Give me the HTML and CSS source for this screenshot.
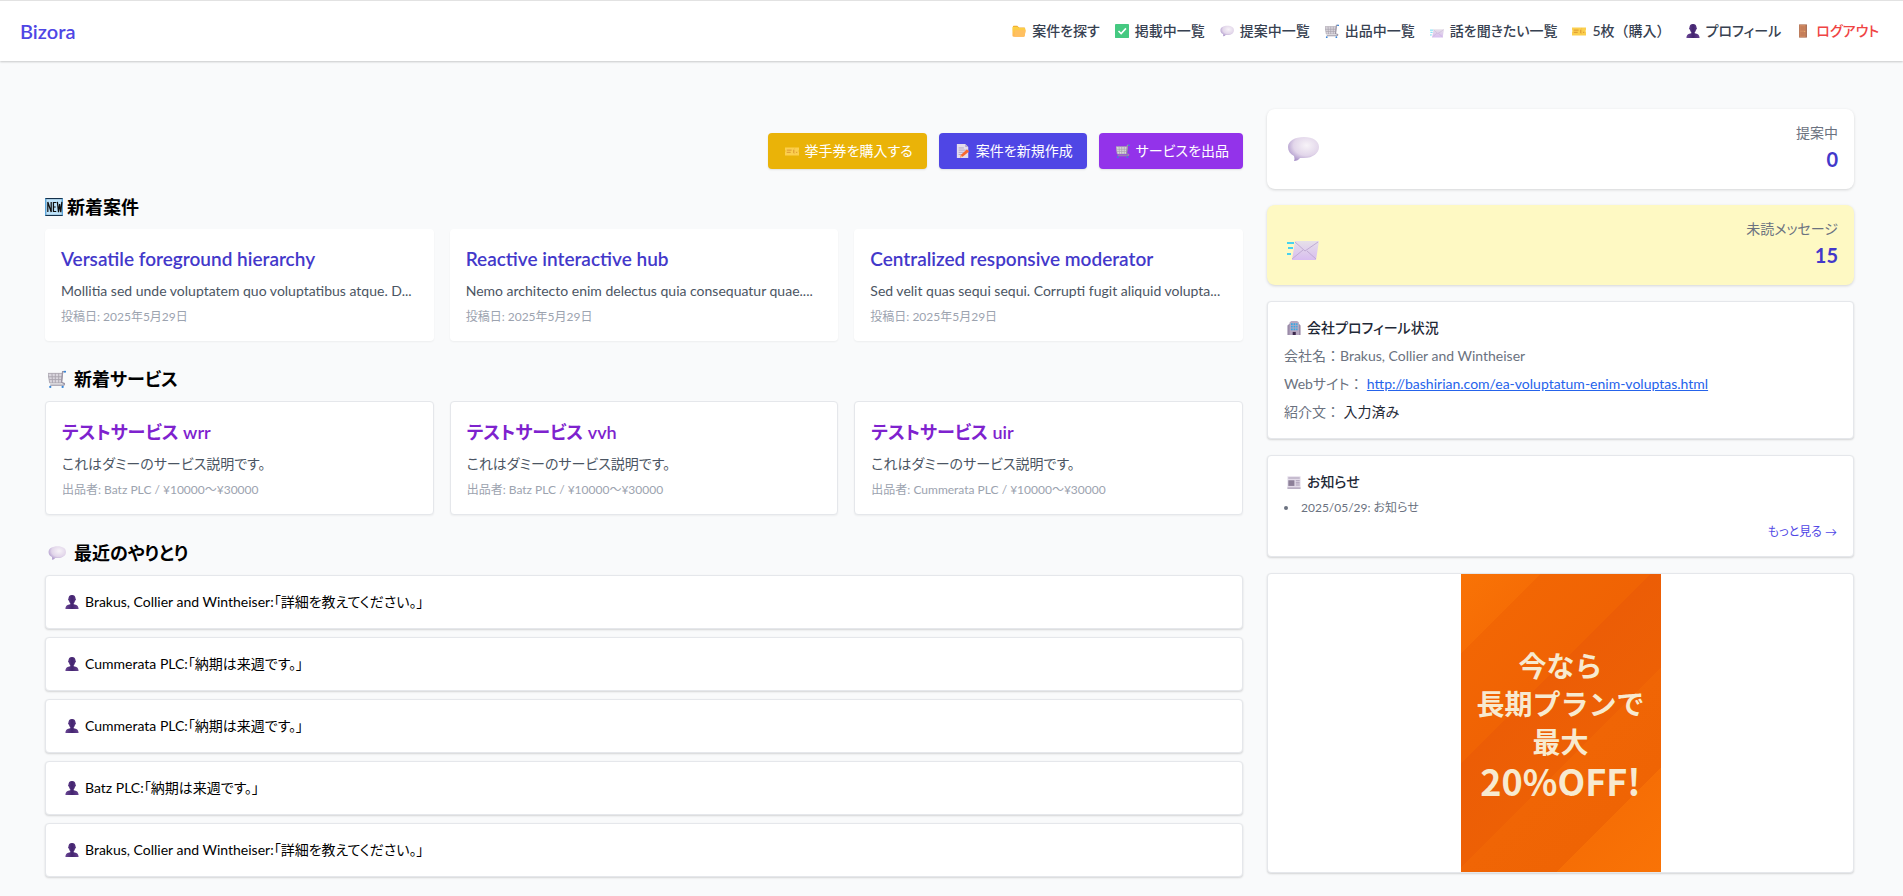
FILE: index.html
```
<!DOCTYPE html>
<html lang="ja">
<head>
    <meta charset="UTF-8">
    <meta name="viewport" content="width=device-width, initial-scale=1.0">
    <title>Bizora</title>
    <link rel="stylesheet" href="styles.css">
</head>
<body>
    <!-- Icon set -->
    <svg class="icon-set" aria-hidden="true">
        <defs>
            <linearGradient id="gFolder" x1="0" y1="0" x2="0" y2="1">
                <stop offset="0" stop-color="#fcd53f"/><stop offset="1" stop-color="#ffb35a"/>
            </linearGradient>
            <radialGradient id="gBubble" cx=".6" cy=".35" r=".7">
                <stop offset="0" stop-color="#f7f3f8"/><stop offset=".6" stop-color="#e2d6ea"/><stop offset="1" stop-color="#a993c9"/>
            </radialGradient>
            <linearGradient id="gMail" x1="0" y1="0" x2="0" y2="1">
                <stop offset="0" stop-color="#e6e0e8"/><stop offset="1" stop-color="#d8bdf0"/>
            </linearGradient>
            <linearGradient id="gUser" x1="0" y1="0" x2="1" y2="0">
                <stop offset="0" stop-color="#6b4796"/><stop offset=".5" stop-color="#43246f"/><stop offset="1" stop-color="#65418f"/>
            </linearGradient>
        </defs>
        <symbol id="folder" viewBox="0 0 32 32">
            <path fill="#f0a52c" d="M2 6q0-2 2-2h8l4 4h12q2 0 2 2v5H2z"/>
            <path fill="url(#gFolder)" d="M1 8q0-2 2-2h9l4 3h12q2 0 2 2l1 3-2 13q0 2-3 2H4q-3 0-3-3z"/>
            <path fill="#ffc061" d="M7 14h23q2 0 1 2l-2 11q0 2-3 2H4q2 0 2-3z"/>
        </symbol>
        <symbol id="check" viewBox="0 0 32 32">
            <rect x="0" y="0" width="32" height="32" rx="2" fill="#45c981"/>
            <path d="M8 16l6 6L25 10" fill="none" stroke="#fff" stroke-width="3.5"/>
        </symbol>
        <symbol id="bubble" viewBox="0 0 32 32">
            <path fill="url(#gBubble)" d="M17 4c9 0 15 4 15 10s-6 11-15 11q-2 0-4 0-2 3-6 3 1-2 0-5C3 21 1 18 1 14 1 8 8 4 17 4z"/>
        </symbol>
        <symbol id="cart" viewBox="0 0 32 32">
            <path fill="#dad6de" d="M0 6h26l-2 17H3z"/>
            <path d="M0 6h26l-2 17H3zM1 12h24M2 17h22M7 6l1 17M13 6v17M19 6v17" fill="none" stroke="#a9a4ae" stroke-width="1.6"/>
            <path d="M30 3h-4l-2 19 5 2q1 3-3 3H4" fill="none" stroke="#9b95a5" stroke-width="2.4"/>
            <path d="M28 3h4" stroke="#3a86d8" stroke-width="3"/>
            <circle cx="4" cy="30" r="2" fill="#3a86d8"/><circle cx="26" cy="30" r="2" fill="#3a86d8"/>
        </symbol>
        <symbol id="mail" viewBox="0 0 32 32">
            <path fill="url(#gMail)" d="M8 12h24l-3 19H5z"/>
            <path d="M8 13l10 9L31 13M5 30l11-9M29 30l-9-8" fill="none" stroke="#c0abd3" stroke-width="1"/>
            <path d="M0 14h7M1 19h5M0 25h4" stroke="#47d2f0" stroke-width="1.8"/>
        </symbol>
        <symbol id="ticket" viewBox="0 0 32 32">
            <path fill="#fbcf4e" d="M0 8h32v5q-2 3 0 6v7H0v-7q2-3 0-6z"/>
            <path d="M4 14h11M4 19h9M20 13v8M25 19h3" stroke="#d78f2e" stroke-width="2"/>
            <path d="M22 9v15" stroke="#e9a93a" stroke-width="1" stroke-dasharray="2 2"/>
        </symbol>
        <symbol id="user" viewBox="0 0 32 32">
            <path fill="url(#gUser)" d="M16 0c6 0 8 4 8 8 2 1 1 4-1 5-1 4-2 5-3 6v2c6 1 11 3 11 11H1c0-8 5-10 11-11v-2c-1-1-2-2-3-6-2-1-3-4-1-5 0-4 2-8 8-8z"/>
        </symbol>
        <symbol id="door" viewBox="0 0 32 32">
            <rect x="7" y="1" width="18" height="30" fill="#a5694f"/>
            <rect x="8" y="2" width="14" height="28" fill="#d08a62"/>
            <path d="M10 5h10v10H10zM10 18h10v10H10z" fill="#c57e59"/>
            <circle cx="20" cy="17" r="1.2" fill="#f5c06a"/>
        </symbol>
        <symbol id="memo" viewBox="0 0 32 32">
            <path fill="#e4dcec" d="M2 0h19l7 7v25H2z"/>
            <path fill="#b9a8cc" d="M21 0l7 7h-7z"/>
            <path d="M6 9h12M6 14h16M6 19h12M6 24h8" stroke="#a99bbb" stroke-width="1.8"/>
            <path fill="#f8682f" d="M25 12l5 5-15 12-6 2 2-6z"/>
            <path fill="#fbb38a" d="M11 25l4 4-6 2z"/>
        </symbol>
        <symbol id="new" viewBox="0 0 32 32">
            <rect x="1" y="1" width="30" height="30" fill="#bfe4fb" stroke="#14304a" stroke-width="2"/>
            <path d="M1 31V1M31 1v30" stroke="#5aa5dc" stroke-width="2"/>
            <path d="M5 25V7l6 18V7M20 8h-5v16h5M15 16h4M22 7l2 18 2-14 2 14 2-18" fill="none" stroke="#111" stroke-width="2.2"/>
        </symbol>
        <symbol id="building" viewBox="0 0 32 32">
            <path fill="#9a8ba8" d="M1 10l6-5v27H1zM26 5l5 5v22h-5z"/>
            <path fill="#b7a9c2" d="M6 3l4-3h13l4 3v29H6z"/>
            <path fill="#35a8e4" d="M9 5h4v4H9zM15 5h4v4h-4zM21 5h3v4h-3zM9 11h4v4H9zM15 11h4v4h-4zM21 11h3v4h-3zM9 17h4v4H9zM15 17h4v4h-4zM21 17h3v4h-3z"/>
            <path fill="#3c2a4d" d="M13 25h7v7h-7z"/>
        </symbol>
        <symbol id="news" viewBox="0 0 32 32">
            <path fill="#e3dbe9" d="M1 3h30v28H1z"/>
            <path d="M3 7h26M20 13h9M20 18h9M20 23h9M1 30h30" stroke="#a99db5" stroke-width="2.4"/>
            <path fill="#8d8099" d="M3 12h14v13H3z"/>
        </symbol>
    </svg>

    <header class="navbar">
        <a href="#" class="logo">Bizora</a>
        <nav class="nav-links">
            <a href="#"><svg class="icon"><use href="#folder"/></svg>案件を探す</a>
            <a href="#"><svg class="icon"><use href="#check"/></svg>掲載中一覧</a>
            <a href="#"><svg class="icon"><use href="#bubble"/></svg>提案中一覧</a>
            <a href="#"><svg class="icon"><use href="#cart"/></svg>出品中一覧</a>
            <a href="#"><svg class="icon"><use href="#mail"/></svg>話を聞きたい一覧</a>
            <a href="#"><svg class="icon"><use href="#ticket"/></svg>5枚<span class="full-width">（購入）</span></a>
            <a href="#"><svg class="icon"><use href="#user"/></svg>プロフィール</a>
            <button type="button" class="logout"><svg class="icon"><use href="#door"/></svg>ログアウト</button>
        </nav>
    </header>

    <div class="container">
        <main class="main-column">
            <div class="actions">
                <button type="button" class="btn btn-yellow"><svg class="icon"><use href="#ticket"/></svg>挙手券を購入する</button>
                <button type="button" class="btn btn-indigo"><svg class="icon"><use href="#memo"/></svg>案件を新規作成</button>
                <button type="button" class="btn btn-purple"><svg class="icon"><use href="#cart"/></svg>サービスを出品</button>
            </div>

            <!-- New projects -->
            <section>
                <h2><svg class="icon icon-new"><use href="#new"/></svg>新着案件</h2>
                <div class="cards">
                    <article class="card">
                        <h3>Versatile foreground hierarchy</h3>
                        <p class="desc">Mollitia sed unde voluptatem quo voluptatibus atque. D...</p>
                        <p class="meta">投稿日: 2025年5月29日</p>
                    </article>
                    <article class="card">
                        <h3>Reactive interactive hub</h3>
                        <p class="desc">Nemo architecto enim delectus quia consequatur quae....</p>
                        <p class="meta">投稿日: 2025年5月29日</p>
                    </article>
                    <article class="card">
                        <h3>Centralized responsive moderator</h3>
                        <p class="desc">Sed velit quas sequi sequi. Corrupti fugit aliquid volupta...</p>
                        <p class="meta">投稿日: 2025年5月29日</p>
                    </article>
                </div>
            </section>

            <!-- New services -->
            <section>
                <h2><svg class="icon"><use href="#cart"/></svg>新着サービス</h2>
                <div class="cards">
                    <article class="card card-service">
                        <h3>テストサービス wrr</h3>
                        <p class="desc">これはダミーのサービス説明です。</p>
                        <p class="meta">出品者: Batz PLC / ¥10000〜¥30000</p>
                    </article>
                    <article class="card card-service">
                        <h3>テストサービス vvh</h3>
                        <p class="desc">これはダミーのサービス説明です。</p>
                        <p class="meta">出品者: Batz PLC / ¥10000〜¥30000</p>
                    </article>
                    <article class="card card-service">
                        <h3>テストサービス uir</h3>
                        <p class="desc">これはダミーのサービス説明です。</p>
                        <p class="meta">出品者: Cummerata PLC / ¥10000〜¥30000</p>
                    </article>
                </div>
            </section>

            <!-- Recent messages -->
            <section>
                <h2><svg class="icon"><use href="#bubble"/></svg>最近のやりとり</h2>
                <ul class="messages">
                    <li><svg class="icon"><use href="#user"/></svg>Brakus, Collier and Wintheiser:「詳細を教えてください。」</li>
                    <li><svg class="icon"><use href="#user"/></svg>Cummerata PLC:「納期は来週です。」</li>
                    <li><svg class="icon"><use href="#user"/></svg>Cummerata PLC:「納期は来週です。」</li>
                    <li><svg class="icon"><use href="#user"/></svg>Batz PLC:「納期は来週です。」</li>
                    <li><svg class="icon"><use href="#user"/></svg>Brakus, Collier and Wintheiser:「詳細を教えてください。」</li>
                </ul>
            </section>
        </main>

        <aside class="side-column">
            <div class="stat">
                <svg class="stat-icon"><use href="#bubble"/></svg>
                <div class="stat-text">
                    <p>提案中</p>
                    <strong>0</strong>
                </div>
            </div>
            <div class="stat stat-unread">
                <svg class="stat-icon"><use href="#mail"/></svg>
                <div class="stat-text">
                    <p>未読メッセージ</p>
                    <strong>15</strong>
                </div>
            </div>

            <section class="panel">
                <h4><svg class="icon"><use href="#building"/></svg>会社プロフィール状況</h4>
                <p class="full-width">会社名：Brakus, Collier and Wintheiser</p>
                <p>Webサイト<span class="full-width">：</span> <a href="#">http://bashirian.com/ea-voluptatum-enim-voluptas.html</a></p>
                <p>紹介文<span class="full-width">：</span> <span class="done">入力済み</span></p>
            </section>

            <section class="panel">
                <h4><svg class="icon"><use href="#news"/></svg>お知らせ</h4>
                <ul class="news">
                    <li>2025/05/29: お知らせ</li>
                </ul>
                <a href="#" class="more">もっと見る →</a>
            </section>

            <div class="ad">
                <div class="ad-banner">
                    <p>今なら</p>
                    <p>長期プランで</p>
                    <p>最大</p>
                    <p class="ad-off">20%OFF!</p>
                </div>
            </div>
        </aside>
    </div>
</body>
</html>
```
FILE: styles.css
```
* {
    box-sizing: border-box;
}
body {
    font-family: Lato, "Noto Sans CJK JP", sans-serif;
    font-size: 14px;
    line-height: 20px;
    font-feature-settings: "palt";
    background: #f9fafb;
    color: #000;
    margin: 0;
}
h2, h3, h4, p, ul {
    margin: 0;
    padding: 0;
}
button {
    font: inherit;
    font-feature-settings: inherit;
    border: none;
    cursor: pointer;
}
.full-width {
    font-feature-settings: normal;
}
.icon-set {
    display: block;
    width: 0;
    height: 0;
}
.icon {
    flex: none;
    width: 14px;
    height: 14px;
    margin: 0 6px 0 3px;
}

/* Navbar */
.navbar {
    display: flex;
    justify-content: space-between;
    align-items: center;
    min-height: 61px;
    padding: 0 24px 0 20px;
    background: white;
    border-top: 1px solid #e2e2e2;
    box-shadow: 0 1px 2px rgba(0, 0, 0, 0.2);
}
.logo {
    color: #4f46e5;
    font-size: 20px;
    font-weight: 600;
    line-height: 28px;
    text-decoration: none;
}
.nav-links {
    display: flex;
    gap: 12px;
    font-weight: 500;
}
.nav-links a, .logout {
    display: flex;
    align-items: center;
    padding: 0;
    background: none;
    color: #374151;
    text-decoration: none;
}
.nav-links .logout {
    color: #ef4444;
}

/* Layout */
.container {
    display: grid;
    grid-template-columns: 1198fr 587fr;
    gap: 24px;
    align-items: start;
    padding: 48px 49px 16px 45px;
}
.main-column {
    display: flex;
    flex-direction: column;
    gap: 24px;
    min-width: 0;
    padding-top: 24px;
}
.side-column {
    display: flex;
    flex-direction: column;
    gap: 16px;
    min-width: 0;
}

/* Buttons */
.actions {
    display: flex;
    justify-content: flex-end;
    gap: 12px;
}
.btn {
    display: flex;
    align-items: center;
    padding: 8px 14px;
    border-radius: 4px;
    color: white;
    box-shadow: 0 1px 2px rgba(0, 0, 0, 0.1);
}
.btn-yellow {
    background: #eab308;
}
.btn-indigo {
    background: #4f46e5;
}
.btn-purple {
    background: #9333ea;
}

/* Cards */
h2 {
    display: flex;
    align-items: center;
    margin-bottom: 8px;
    font-size: 18px;
    font-weight: 600;
    line-height: 28px;
}
h2 .icon {
    width: 18px;
    height: 18px;
    margin: 0 8px 0 3px;
}
h2 .icon-new {
    margin: 0 4px 0 0;
}
.cards {
    display: grid;
    grid-template-columns: repeat(3, minmax(0, 1fr));
    gap: 16px;
}
.card {
    display: flex;
    flex-direction: column;
    gap: 8px;
    padding: 16px;
    background: white;
    border-radius: 4px;
    box-shadow: 0 1px 2px rgba(0, 0, 0, 0.05);
}
.card-service {
    border: 1px solid #e5e7eb;
}
.card h3 {
    color: #4338ca;
    font-size: 19px;
    font-weight: 600;
    line-height: 28px;
}
.card-service h3 {
    color: #7e22ce;
    font-size: 18px;
}
.desc {
    color: #4b5563;
    white-space: nowrap;
    overflow: hidden;
}
.meta {
    color: #9ca3af;
    font-size: 12px;
    line-height: 16px;
}

/* Messages */
.messages {
    display: flex;
    flex-direction: column;
    gap: 8px;
    list-style: none;
}
.messages li {
    display: flex;
    align-items: center;
    padding: 16px;
    background: white;
    border: 1px solid #e5e7eb;
    border-radius: 4px;
    box-shadow: 0 1px 2px rgba(0, 0, 0, 0.15);
}

/* Sidebar */
.stat {
    display: flex;
    justify-content: space-between;
    align-items: center;
    padding: 14px 16px 14px 20px;
    background: white;
    border-radius: 8px;
    box-shadow: 0 1px 3px rgba(0, 0, 0, 0.15);
}
.stat-unread {
    background: #fef9c3;
}
.stat-icon {
    width: 32px;
    height: 32px;
}
.stat-text {
    display: flex;
    flex-direction: column;
    color: #6b7280;
    text-align: right;
}
.stat-text strong {
    color: #4338ca;
    font-size: 20px;
    line-height: 32px;
}
.panel {
    display: flex;
    flex-direction: column;
    gap: 8px;
    padding: 16px;
    background: white;
    border: 1px solid #e5e7eb;
    border-radius: 4px;
    box-shadow: 0 1px 2px rgba(0, 0, 0, 0.15);
    color: #6b7280;
}
.panel h4 {
    display: flex;
    align-items: center;
    color: #1f2937;
    font-size: 14px;
    font-weight: 500;
}
.panel p a {
    color: #2563eb;
}
.done {
    color: #1f2937;
}
.news {
    list-style: inside;
    font-size: 12px;
    line-height: 16px;
}
.panel .more {
    align-self: flex-end;
    color: #4f46e5;
    font-size: 12px;
    line-height: 16px;
    text-decoration: none;
}

/* Ad banner */
.ad {
    display: flex;
    justify-content: center;
    background: white;
    border: 1px solid #e5e7eb;
    border-radius: 4px;
    box-shadow: 0 1px 2px rgba(0, 0, 0, 0.15);
}
.ad-banner {
    display: flex;
    flex-direction: column;
    justify-content: center;
    width: 200px;
    min-height: 298px;
    background: linear-gradient(135deg, #f97306 0%, #f66d05 16%, #f26604 16%, #f06304 38%, #ec5d06 38%, #ed6005 59%, #f06505 59%, #ef6404 79%, #f66e05 79%, #f97306 100%);
    color: #f7ead0;
    font-size: 28px;
    font-feature-settings: normal;
    font-weight: 700;
    line-height: 38px;
    text-align: center;
}
.ad-off {
    font-family: "Noto Sans CJK JP", sans-serif;
    font-size: 36px;
}
```
